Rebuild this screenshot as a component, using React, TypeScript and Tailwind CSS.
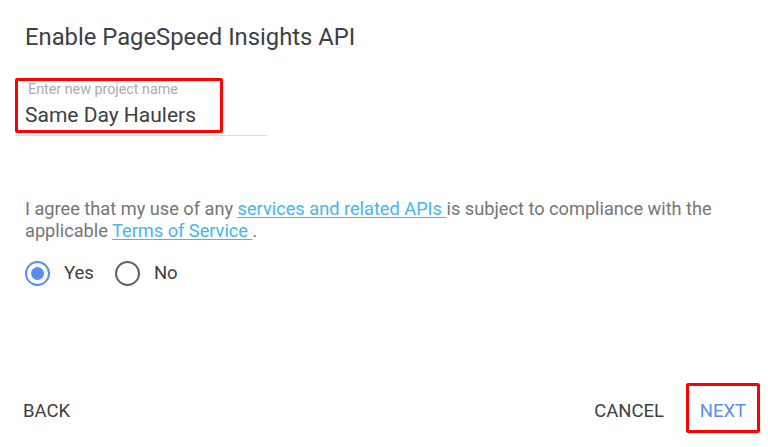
import React, { useState } from "react";

export default function App() {
  const [agree, setAgree] = useState("yes");

  return (
    <div
      className="w-[768px] h-[447px] bg-white flex flex-col overflow-hidden"
      style={{ fontFamily: "Roboto, 'Liberation Sans', sans-serif" }}
    >
      {/* Title */}
      <h1 className="pl-[25px] pt-[23px] text-[23.8px] leading-[28px] text-[#3c4043] font-normal">
        Enable PageSpeed Insights API
      </h1>

      {/* Project name field */}
      <div className="ml-[15px] mt-[27px] w-[252px] border-b border-[#dadce0] pb-[2px]">
        <div className="w-[208px] h-[55px] border-[3px] border-[#ff0000] rounded-[2px] flex flex-col">
          <span className="pl-[10px] text-[14.3px] leading-[16px] text-[#a8abaf]">
            Enter new project name
          </span>
          <span className="pl-[7px] mt-[5px] text-[21px] leading-[26px] text-[#3c4043]">
            Same Day Haulers
          </span>
        </div>
      </div>

      {/* Terms */}
      <p className="pl-[25px] pr-[30px] mt-[62px] text-[18.2px] leading-[22px] text-[#757575]">
        I agree that my use of any{" "}
        <a href="#" className="text-[#45b6f0] underline underline-offset-2">
          services and related APIs&nbsp;
        </a>
        is subject to compliance with the applicable{" "}
        <a href="#" className="text-[#45b6f0] underline underline-offset-2">
          Terms of Service&nbsp;
        </a>
        .
      </p>

      {/* Yes / No */}
      <div className="pl-[25px] mt-[18px] flex items-center">
        <button onClick={() => setAgree("yes")} className="flex items-center">
          <span
            className={
              agree === "yes"
                ? "w-[25px] h-[25px] rounded-full border-[2px] border-[#5b8def] flex items-center justify-center"
                : "w-[25px] h-[25px] rounded-full border-[2px] border-[#5f6368]"
            }
          >
            {agree === "yes" && <span className="w-[13px] h-[13px] rounded-full bg-[#5b8def]" />}
          </span>
          <span className="ml-[14px] text-[18.5px] text-[#3c4043]">Yes</span>
        </button>
        <button onClick={() => setAgree("no")} className="ml-[21px] flex items-center">
          <span
            className={
              agree === "no"
                ? "w-[25px] h-[25px] rounded-full border-[2px] border-[#5b8def] flex items-center justify-center"
                : "w-[25px] h-[25px] rounded-full border-[2px] border-[#5f6368]"
            }
          >
            {agree === "no" && <span className="w-[13px] h-[13px] rounded-full bg-[#5b8def]" />}
          </span>
          <span className="ml-[14px] text-[18.5px] text-[#3c4043]">No</span>
        </button>
      </div>

      {/* Footer buttons */}
      <div className="mt-auto mb-[14px] flex items-center justify-between pl-[23px] pr-[8px]">
        <button className="pt-[8px] text-[18.5px] font-normal text-[#3c4043]">BACK</button>
        <div className="flex items-center">
          <button className="pt-[8px] text-[18.5px] font-normal text-[#3c4043] mr-[22px]">CANCEL</button>
          <button className="w-[74px] h-[50px] pt-[7px] border-[3px] border-[#ff0000] rounded-[2px] text-[18.5px] font-normal text-[#5b8def]">
            NEXT
          </button>
        </div>
      </div>
    </div>
  );
}
